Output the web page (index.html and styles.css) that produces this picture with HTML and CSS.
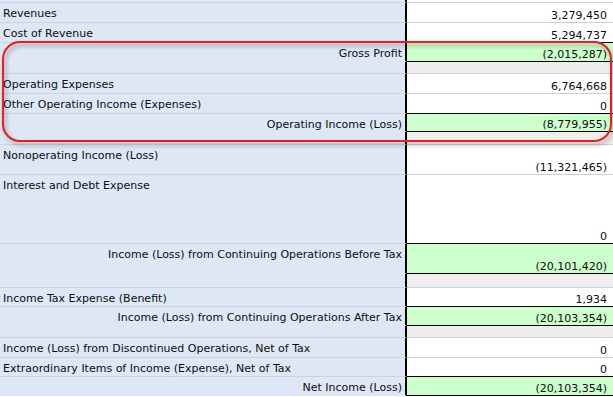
FILE: index.html
```html
<!DOCTYPE html>
<html>
<head>
<meta charset="utf-8">
<link rel="stylesheet" href="styles.css">
</head>
<body>
<div class="sheet">
<table class="stmt">
  <tr class="r-top"><td class="lbl"></td><td class="val"></td></tr>
  <tr class="r20"><td class="lbl">Revenues</td><td class="val">3,279,450</td></tr>
  <tr class="r20"><td class="lbl">Cost of Revenue</td><td class="val pre">5,294,737</td></tr>
  <tr class="r19 total"><td class="lbl">Gross Profit</td><td class="val">(2,015,287)</td></tr>
  <tr class="r12 gap"><td class="lbl"></td><td class="val"></td></tr>
  <tr class="r20"><td class="lbl">Operating Expenses</td><td class="val">6,764,668</td></tr>
  <tr class="r20"><td class="lbl">Other Operating Income (Expenses)</td><td class="val pre">0</td></tr>
  <tr class="r18 total"><td class="lbl">Operating Income (Loss)</td><td class="val">(8,779,955)</td></tr>
  <tr class="r13 gap"><td class="lbl"></td><td class="val"></td></tr>
  <tr class="r30"><td class="lbl">Nonoperating Income (Loss)</td><td class="val">(11,321,465)</td></tr>
  <tr class="r69"><td class="lbl">Interest and Debt Expense</td><td class="val pre">0</td></tr>
  <tr class="r30 total"><td class="lbl">Income (Loss) from Continuing Operations Before Tax</td><td class="val">(20,101,420)</td></tr>
  <tr class="r14 gap"><td class="lbl"></td><td class="val"></td></tr>
  <tr class="r19"><td class="lbl">Income Tax Expense (Benefit)</td><td class="val pre">1,934</td></tr>
  <tr class="r19 total"><td class="lbl">Income (Loss) from Continuing Operations After Tax</td><td class="val">(20,103,354)</td></tr>
  <tr class="r12 gap"><td class="lbl"></td><td class="val"></td></tr>
  <tr class="r20"><td class="lbl">Income (Loss) from Discontinued Operations, Net of Tax</td><td class="val">0</td></tr>
  <tr class="r19"><td class="lbl">Extraordinary Items of Income (Expense), Net of Tax</td><td class="val pre">0</td></tr>
  <tr class="r19 total"><td class="lbl">Net Income (Loss)</td><td class="val">(20,103,354)</td></tr>
</table>
<div class="callout"></div>
</div>
</body>
</html>
```

FILE: styles.css
```css
html, body {
  margin: 0;
  padding: 0;
  background: #ffffff;
}

.sheet {
  position: relative;
  width: 613px;
  height: 397px;
  overflow: hidden;
}

.stmt {
  border-collapse: separate;
  border-spacing: 0;
  width: 613px;
  table-layout: fixed;
  font-family: "DejaVu Sans", Verdana, sans-serif;
  font-size: 11px;
  line-height: 13px;
  color: #0d0d0d;
}

.stmt td {
  padding: 0;
  box-sizing: border-box;
}

.lbl {
  width: 407px;
  background: #dde7f5;
  border-right: 2px solid #000;
  border-bottom: 1px solid #cfd3d8;
  vertical-align: top;
  padding: 4px 3px 0 3px !important;
  text-align: left;
  white-space: nowrap;
}

.val {
  background: #ffffff;
  border-bottom: 1px solid #cfcfcf;
  vertical-align: bottom;
  text-align: right;
  padding: 0 6px 0 0 !important;
  white-space: nowrap;
}

.val.pre {
  border-bottom-color: #000;
}

.total .lbl {
  text-align: right;
  border-bottom-color: transparent;
}

.total .val {
  background: #ccffcc;
  border-bottom-color: #000;
}

.gap .val {
  background: #eeeeee;
}

.r-top { height: 3px; }
.r-top .lbl { padding-top: 0 !important; }
.r12 { height: 12px; }
.r13 { height: 13px; }
.r14 { height: 14px; }
.r18 { height: 18px; }
.r19 { height: 19px; }
.r20 { height: 20px; }
.r30 { height: 30px; }
.r69 { height: 69px; }

.gap .lbl { padding-top: 0 !important; }

.callout {
  position: absolute;
  left: 2px;
  top: 41px;
  width: 610px;
  height: 101px;
  box-sizing: border-box;
  border: 2px solid #ee1c1c;
  border-radius: 18px;
  filter: drop-shadow(2px 3px 2px rgba(0, 0, 0, 0.35));
}
```
